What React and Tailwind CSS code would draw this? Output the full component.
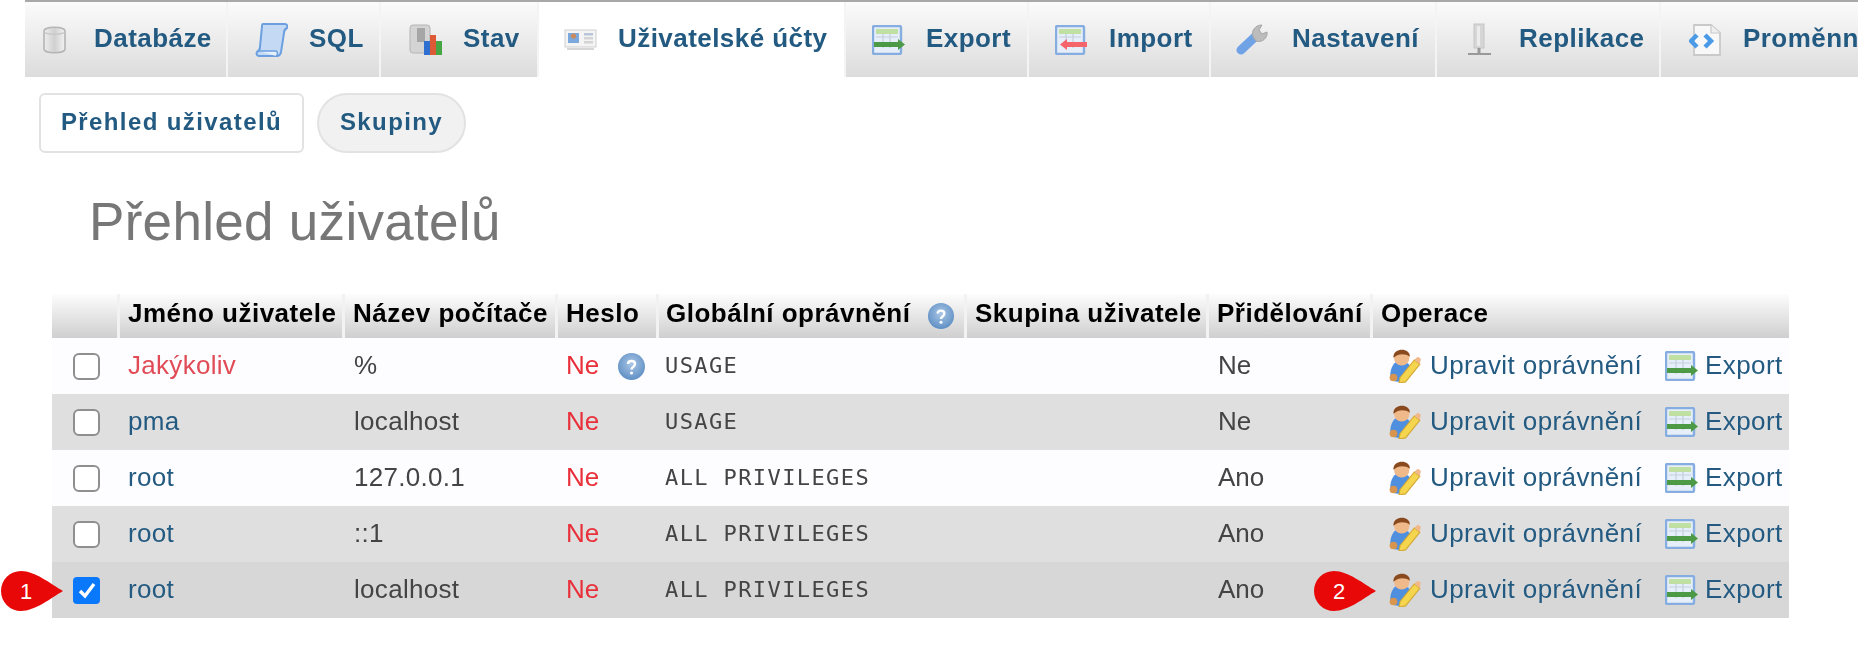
import React from 'react';

const sans = { fontFamily: '"Liberation Sans", Arial, sans-serif' };

function DbIcon() {
  return (
    <svg viewBox="0 0 25 28" className="w-[25px] h-[28px]">
      <defs>
        <linearGradient id="dbg" x1="0" x2="1" y1="0" y2="0">
          <stop offset="0" stopColor="#eeeeee" />
          <stop offset="0.5" stopColor="#d0d0d0" />
          <stop offset="1" stopColor="#f2f2f2" />
        </linearGradient>
      </defs>
      <path d="M2 5c0-5 21-5 21 0v18c0 5-21 5-21 0z" fill="url(#dbg)" stroke="#b5b5b5" strokeWidth="1.6" />
      <path d="M2 6c3 3 18 3 21 0" fill="none" stroke="#c4c4c4" strokeWidth="1.2" />
    </svg>
  );
}

function SqlIcon() {
  return (
    <svg viewBox="0 0 33 35" className="w-[33px] h-[35px]">
      <path d="M8 2h22c2 0 3 2 2 4-2 1-3 3-3 5l-3 19c0 2-2 4-4 4H4c-2 0-3-2-2-4 2-1 3-3 3-5L7 4c0-1 0-2 1-2z" fill="#c3d9f4" stroke="#6b9fe0" strokeWidth="2" />
      <path d="M4 29h17c2 1 2 3 0 5" fill="#e6f0fb" stroke="#6b9fe0" strokeWidth="1.4" />
    </svg>
  );
}

function StatusIcon() {
  return (
    <svg viewBox="0 0 34 31" className="w-[34px] h-[31px]">
      <rect x="1" y="1" width="20" height="28" rx="3" fill="#d4d4d4" stroke="#b4b4b4" />
      <rect x="8" y="4" width="8" height="14" fill="#a6a6a6" />
      <rect x="15" y="17" width="6" height="14" fill="#2f6fd0" />
      <rect x="21" y="11" width="6" height="20" fill="#dc5a35" />
      <rect x="27" y="17" width="6" height="14" fill="#47a544" />
    </svg>
  );
}

function UsersIcon() {
  return (
    <svg viewBox="0 0 33 21" className="w-[33px] h-[21px]">
      <rect x="1" y="1" width="31" height="17" fill="#f4f4f4" stroke="#cfcfcf" />
      <rect x="4" y="4" width="11" height="10" fill="#7ba8dd" />
      <circle cx="9.5" cy="7" r="2.6" fill="#c98a5e" />
      <rect x="20" y="4" width="9" height="2.5" fill="#b9c6d8" />
      <rect x="20" y="8" width="9" height="2.5" fill="#d4d4d4" />
      <rect x="20" y="12" width="9" height="2.5" fill="#d4d4d4" />
      <path d="M3 20h27" stroke="#c8c8c8" strokeWidth="1.5" />
    </svg>
  );
}

function TableArrowIcon({ color = 'green', className = 'w-[33px] h-[30px]' }) {
  const isGreen = color === 'green';
  return (
    <svg viewBox="0 0 33 30" className={className}>
      <rect x="1" y="1" width="28" height="28" rx="1.5" fill="#e6eef9" stroke="#86ade0" strokeWidth="2.4" />
      <rect x="4" y="4" width="22" height="5" fill="#bfe0a2" />
      <path d="M4 12h22M11 9v14M18 9v14" stroke="#c3cfdd" strokeWidth="1.2" />
      {isGreen ? (
        <path d="M2 17h24v-3l7 5.5-7 5.5v-3H2z" fill="#4c9a46" />
      ) : (
        <path d="M32 17H12v-3l-7 5.5 7 5.5v-3h20z" fill="#f4646a" />
      )}
    </svg>
  );
}

function WrenchIcon() {
  return (
    <svg viewBox="0 0 38 33" className="w-[38px] h-[33px]">
      <path d="M5 27 21 12" stroke="#6fa3e6" strokeWidth="9" strokeLinecap="round" />
      <path d="M17 14c-2-6 2-12 9-12l-3 5 3 4 5-2c1 6-5 11-11 9z" fill="#bcbcbc" stroke="#a6a6a6" />
    </svg>
  );
}

function ReplicationIcon() {
  return (
    <svg viewBox="0 0 25 33" className="w-[25px] h-[33px]">
      <rect x="7" y="1" width="10" height="24" fill="#d6d6d6" stroke="#c6c6c6" />
      <rect x="10" y="3" width="3" height="20" fill="#ececec" />
      <path d="M12 25v5" stroke="#999" strokeWidth="3" />
      <path d="M1 31h23" stroke="#999" strokeWidth="2" />
    </svg>
  );
}

function VariablesIcon() {
  return (
    <svg viewBox="0 0 32 33" className="w-[32px] h-[33px]">
      <path d="M5 2h17l9 8v22H5z" fill="#f8f8f8" stroke="#c9c9c9" strokeWidth="1.8" />
      <path d="M22 2v8h9" fill="#eeeeee" stroke="#c9c9c9" strokeWidth="1.2" />
      <path d="M8 12 2 18l6 6M16 12l6 6-6 6" fill="none" stroke="#4a9ae8" strokeWidth="4.4" />
    </svg>
  );
}

function HelpIcon({ className }) {
  return (
    <svg viewBox="0 0 29 29" className={className}>
      <defs>
        <radialGradient id="helpg" cx="0.5" cy="0.4" r="0.6">
          <stop offset="0" stopColor="#a9c6e6" />
          <stop offset="1" stopColor="#5f8fc4" />
        </radialGradient>
      </defs>
      <circle cx="14.5" cy="14.5" r="13.5" fill="url(#helpg)" />
      <path d="M11 12c0-4 7-4 7 0 0 3-3.5 3-3.5 5.5" fill="none" stroke="#fff" strokeWidth="2.4" />
      <circle cx="14.5" cy="21" r="1.6" fill="#fff" />
    </svg>
  );
}

function UserEditIcon() {
  return (
    <svg viewBox="0 0 29 31" className="w-[34px] h-[34px] shrink-0">
      <path d="M1 25c0-9 4-14 9-14s10 3 10 8l-7 11c-7 0-12-1-12-5z" fill="#4f8fe0" />
      <circle cx="4" cy="26" r="3.5" fill="#d8954f" />
      <circle cx="11.5" cy="8" r="7" fill="#f0b98a" />
      <path d="M4 8c-1-9 15-10 15-1-5-3-10-3-15 1z" fill="#8a4a1f" />
      <path d="M10 26 23 10l5 4-13 16-6 1z" fill="#f5d54e" stroke="#d2a832" />
      <path d="M23 10l5 4 1-5-3-2z" fill="#f0b98a" />
    </svg>
  );
}

const tabs = [
  { label: 'Databáze', icon: <DbIcon />, className: 'w-[203px] pl-[17px] gap-[27px]' },
  { label: 'SQL', icon: <SqlIcon />, className: 'w-[153px] pl-[27px] gap-[21px]' },
  { label: 'Stav', icon: <StatusIcon />, className: 'w-[158px] pl-[28px] gap-[20px]' },
  { label: 'Uživatelské účty', icon: <UsersIcon />, className: 'w-[307px] pl-[25px] gap-[21px]', active: true },
  { label: 'Export', icon: <TableArrowIcon />, className: 'w-[183px] pl-[26px] gap-[21px]' },
  { label: 'Import', icon: <TableArrowIcon color="red" />, className: 'w-[182px] pl-[26px] gap-[21px]' },
  { label: 'Nastavení', icon: <WrenchIcon />, className: 'w-[226px] pl-[25px] gap-[18px]' },
  { label: 'Replikace', icon: <ReplicationIcon />, className: 'w-[224px] pl-[30px] gap-[27px]' },
  { label: 'Proměnné', icon: <VariablesIcon />, className: 'w-[240px] pl-[28px] gap-[22px]' },
];

const rows = [
  { user: 'Jakýkoliv', host: '%', help: true, priv: 'USAGE', grant: 'Ne', bg: 'bg-[#fdfdff]', any: true },
  { user: 'pma', host: 'localhost', priv: 'USAGE', grant: 'Ne', bg: 'bg-[#dfdfdf]' },
  { user: 'root', host: '127.0.0.1', priv: 'ALL PRIVILEGES', grant: 'Ano', bg: 'bg-[#fdfdff]' },
  { user: 'root', host: '::1', priv: 'ALL PRIVILEGES', grant: 'Ano', bg: 'bg-[#dfdfdf]' },
  { user: 'root', host: 'localhost', priv: 'ALL PRIVILEGES', grant: 'Ano', bg: 'bg-[#d7d7d7]', checked: true },
];

function Checkbox({ checked }) {
  if (checked) {
    return (
      <div className="w-[27px] h-[27px] rounded-[4px] bg-[#0a78fa] flex items-center justify-center">
        <svg viewBox="0 0 20 20" className="w-[20px] h-[20px]">
          <path d="M3 11l5 5 9-12" fill="none" stroke="#fff" strokeWidth="3.4" />
        </svg>
      </div>
    );
  }
  return <div className="w-[27px] h-[27px] rounded-[6px] bg-white border-2 border-[#8f8f8f]" />;
}

function Badge({ number, className }) {
  return (
    <div className={`absolute top-[571px] w-[62px] h-[40px] ${className}`}>
      <svg viewBox="0 0 62 40" className="absolute inset-0 w-[62px] h-[40px]">
        <path d="M20 0C34 0 50 13 62 20 50 27 34 40 20 40A20 20 0 0 1 20 0z" fill="#e80808" />
      </svg>
      <span className="absolute left-0 top-0 w-[50px] h-[40px] flex items-center justify-center text-white text-[22px]">{number}</span>
    </div>
  );
}

export default function App() {
  return (
    <div className="relative w-[1858px] h-[661px] overflow-hidden bg-white" style={sans}>
      <div className="h-full pl-[25px] blur-[0.7px]">
        {/* top tabs */}
        <div className="flex w-[1833px] h-[77px] overflow-hidden border-t-2 border-[#a8a8a8]">
          {tabs.map((tab) => (
            <div
              key={tab.label}
              className={`shrink-0 flex items-center h-full border-r-2 border-[#f4f4f4] text-[26px] font-bold tracking-[0.45px] text-[#235a81] ${tab.className} ${
                tab.active ? 'bg-white' : 'bg-gradient-to-b from-[#fbfbfb] to-[#dcdcdc]'
              }`}
            >
              {tab.icon}
              <span className="whitespace-nowrap pb-[2px]">{tab.label}</span>
            </div>
          ))}
        </div>

        {/* sub menu */}
        <div className="flex items-center gap-[13px] mt-[16px] ml-[14px] h-[60px]">
          <div className="w-[265px] h-full flex items-center justify-center pb-[2px] bg-white border-2 border-[#e2e2e2] rounded-[6px] text-[24px] font-bold tracking-[1.4px] text-[#235a81]">
            Přehled uživatelů
          </div>
          <div className="w-[149px] h-full flex items-center justify-center pb-[2px] bg-[#f1f1f1] border-2 border-[#e2e2e2] rounded-[30px] text-[24px] font-bold tracking-[1.4px] text-[#235a81]">
            Skupiny
          </div>
        </div>

        <h2 className="mt-[39px] ml-[64px] text-[53px] tracking-[0.3px] leading-[60px] text-[#777777]">Přehled uživatelů</h2>

        {/* users table */}
        <table className="mt-[42px] ml-[27px] w-[1737px] table-fixed border-separate border-spacing-0 text-[26px] text-[#444444]">
          <colgroup>
            <col className="w-[68px]" />
            <col className="w-[225px]" />
            <col className="w-[213px]" />
            <col className="w-[101px]" />
            <col className="w-[308px]" />
            <col className="w-[242px]" />
            <col className="w-[164px]" />
            <col />
          </colgroup>
          <thead>
            <tr className="h-[44px] bg-gradient-to-b from-[#fdfdfd] to-[#cfcfcf] text-black">
              <th className="border-r-[3px] border-[#f2f2f2]" />
              {['Jméno uživatele', 'Název počítače', 'Heslo'].map((title) => (
                <th key={title} className="pl-[8px] pb-[5px] text-left font-bold tracking-[0.5px] whitespace-nowrap border-r-[3px] border-[#f2f2f2]">{title}</th>
              ))}
              <th className="pl-[7px] pb-[5px] text-left font-bold tracking-[0.5px] whitespace-nowrap border-r-[3px] border-[#f2f2f2]">
                <span className="inline-flex items-center gap-[17px]">
                  Globální oprávnění
                  <HelpIcon className="w-[28px] h-[28px] mt-[5px]" />
                </span>
              </th>
              {['Skupina uživatele', 'Přidělování'].map((title) => (
                <th key={title} className="pl-[8px] pb-[5px] text-left font-bold tracking-[0.5px] whitespace-nowrap border-r-[3px] border-[#f2f2f2]">{title}</th>
              ))}
              <th className="pl-[8px] pb-[5px] text-left font-bold tracking-[0.5px]">Operace</th>
            </tr>
          </thead>
          <tbody>
            {rows.map((row, i) => (
              <tr key={i} className={`h-[56px] ${row.bg}`}>
                <td className="pl-[21px]"><Checkbox checked={row.checked} /></td>
                <td className={`pl-[8px] pb-[1px] tracking-[0.3px] ${row.any ? 'text-[#e04b56]' : 'text-[#235a81]'}`}>{row.user}</td>
                <td className="pl-[9px] pb-[1px] tracking-[0.3px]">{row.host}</td>
                <td className="pl-[8px] pb-[1px] text-[#e9303a]">
                  <span className="inline-flex items-center gap-[18px]">
                    Ne
                    {row.help && <HelpIcon className="w-[29px] h-[29px] mt-[2px]" />}
                  </span>
                </td>
                <td className="pl-[6px] pb-[2px] text-[22px] tracking-[1.4px]" style={{ fontFamily: '"DejaVu Sans Mono", monospace' }}>{row.priv}</td>
                <td />
                <td className="pl-[9px] pb-[1px]">{row.grant}</td>
                <td className="pl-[15px] pb-[1px] tracking-[0.4px] text-[#235a81]">
                  <div className="flex items-center">
                    <UserEditIcon />
                    <span className="ml-[8px] whitespace-nowrap">Upravit oprávnění</span>
                    <TableArrowIcon className="ml-[23px] w-[33px] h-[30px] shrink-0" />
                    <span className="ml-[7px]">Export</span>
                  </div>
                </td>
              </tr>
            ))}
          </tbody>
        </table>
      </div>

      {/* numbered callouts */}
      <Badge number="1" className="left-[1px]" />
      <Badge number="2" className="left-[1314px]" />
    </div>
  );
}
